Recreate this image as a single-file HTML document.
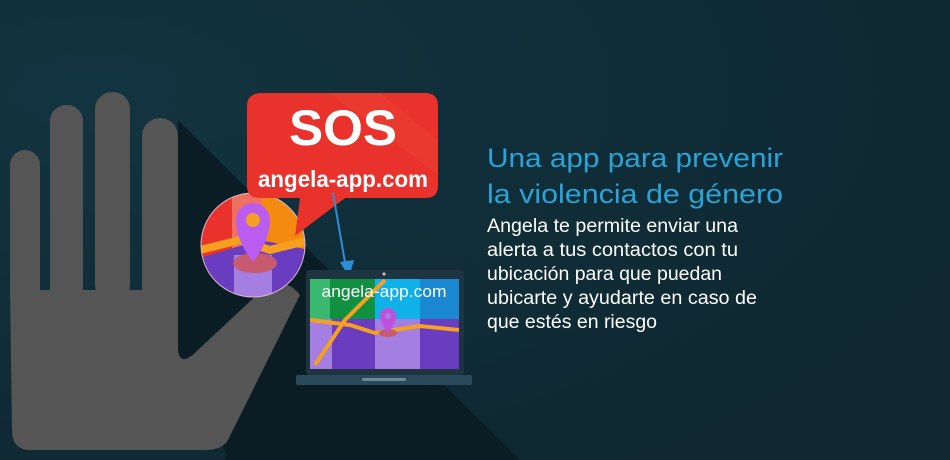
<!DOCTYPE html>
<html><head><meta charset="utf-8"><style>
html,body{margin:0;padding:0;background:#0f2a33;}
svg{display:block}
</style></head><body>
<svg width="950" height="460" viewBox="0 0 950 460" xmlns="http://www.w3.org/2000/svg">
<defs>
<clipPath id="cc"><circle cx="253" cy="245" r="52"/></clipPath>
<clipPath id="sc"><rect x="310" y="279" width="149" height="90"/></clipPath>
<radialGradient id="bg" cx="0.1" cy="0.2" r="1">
<stop offset="0" stop-color="#123440"/><stop offset="1" stop-color="#0e2730"/>
</radialGradient>
</defs>
<rect width="950" height="460" fill="url(#bg)"/>
<!-- long shadow -->
<polygon points="178,120 520,460 230,460 178,360" fill="#0a1d24"/>
<polygon points="280,290 330,320 520,460 225,460" fill="#0a1d24"/>
<!-- hand -->
<g fill="#555555">
<rect x="10" y="150" width="30" height="160" rx="15"/>
<rect x="50" y="105" width="33" height="200" rx="16"/>
<rect x="95" y="92" width="35" height="210" rx="17"/>
<rect x="142" y="118" width="36" height="200" rx="18"/>
<path d="M10,290 L178,290 L178,350 Q180,368 198,350 L262,290 Q285,275 300,295 L228,440 Q222,450 205,450 L30,450 Q12,450 12,430 Z"/>
</g>
<!-- map circle -->
<g clip-path="url(#cc)">
<rect x="200" y="190" width="110" height="110" fill="#e8322b"/>
<rect x="232" y="190" width="30" height="70" fill="#f07060"/>
<rect x="262" y="190" width="48" height="70" fill="#f58a10"/>
<polygon points="200,258 260,240 310,250 310,300 200,300" fill="#6a3cc0"/>
<rect x="234" y="255" width="38" height="50" fill="#a47ee0"/>
<path d="M200,250 L240,240 L270,250 L310,240" stroke="#f7a020" stroke-width="8" fill="none"/>
<ellipse cx="255" cy="263" rx="22" ry="10" fill="#c85a70"/>
</g>
<circle cx="253" cy="245" r="52" fill="none" stroke="#d8b8c8" stroke-width="1"/>
<path d="M253,262 Q236,240 236,220 A17,17 0 0 1 270,220 Q270,240 253,262Z" fill="#bb5cf0"/>
<circle cx="253" cy="220" r="7" fill="#f5a020"/>
<!-- bubble -->
<path d="M262,93 L425,93 Q438,93 438,106 L438,186 Q438,198 425,198 L345,198 L295,236 L300,198 L260,198 Q247,198 247,186 L247,106 Q247,93 262,93Z" fill="#e8322b"/>
<polygon points="330,93 380,93 438,140 438,175" fill="#ee4a3a" opacity="0.35"/>
<text x="343" y="145" text-anchor="middle" font-family="Liberation Sans,sans-serif" font-weight="bold" font-size="50" fill="#fff" textLength="108" lengthAdjust="spacingAndGlyphs">SOS</text>
<text x="343" y="187" text-anchor="middle" font-family="Liberation Sans,sans-serif" font-weight="bold" font-size="23" fill="#fff" textLength="170" lengthAdjust="spacingAndGlyphs">angela-app.com</text>
<!-- arrow -->
<line x1="333" y1="193" x2="346" y2="268" stroke="#2a90d8" stroke-width="2"/>
<polygon points="340,262 354,260 349,277" fill="#2a90d8"/>
<!-- laptop -->
<rect x="306" y="270" width="158" height="105" rx="4" fill="#1e3541"/>
<circle cx="384" cy="274" r="1.5" fill="#ccc"/>
<g clip-path="url(#sc)">
<rect x="310" y="279" width="149" height="90" fill="#6a3cc0"/>
<rect x="310" y="279" width="20" height="40" fill="#3bb870"/>
<rect x="330" y="279" width="45" height="40" fill="#109040"/>
<rect x="375" y="279" width="45" height="40" fill="#10b0e8"/>
<rect x="420" y="279" width="39" height="40" fill="#1a88d0"/>
<rect x="310" y="319" width="22" height="50" fill="#a47ee0"/>
<rect x="375" y="319" width="45" height="50" fill="#a47ee0"/>
<path d="M310,320 L350,325 L375,333 L420,326 L459,330" stroke="#f5a020" stroke-width="4" fill="none"/>
<path d="M315,365 L345,320 L385,280" stroke="#f5a020" stroke-width="4" fill="none"/>
<ellipse cx="388" cy="333" rx="9" ry="4" fill="#c85a70"/>
<path d="M388,333 Q380,322 380,316 A8,8 0 0 1 396,316 Q396,322 388,333Z" fill="#c050e0"/>
<circle cx="388" cy="316" r="3" fill="#a47ee0"/>
</g>
<text x="384" y="297" text-anchor="middle" font-family="Liberation Sans,sans-serif" font-size="17" fill="#fff" textLength="125" lengthAdjust="spacingAndGlyphs">angela-app.com</text>
<rect x="296" y="375" width="176" height="10" rx="2" fill="#2a4a5c"/>
<rect x="362" y="378" width="44" height="3" rx="1.5" fill="#6a8a9a"/>
<!-- text -->
<g font-family="Liberation Sans,sans-serif">
<text x="487" y="167" font-size="27" fill="#2aa3d6" textLength="296" lengthAdjust="spacingAndGlyphs">Una app para prevenir</text>
<text x="487" y="203" font-size="27" fill="#2aa3d6" textLength="296" lengthAdjust="spacingAndGlyphs">la violencia de género</text>
<g font-size="19" fill="#fff">
<text x="487" y="232" textLength="251" lengthAdjust="spacingAndGlyphs">Angela te permite enviar una</text>
<text x="487" y="256" textLength="251" lengthAdjust="spacingAndGlyphs">alerta a tus contactos con tu</text>
<text x="487" y="280" textLength="235" lengthAdjust="spacingAndGlyphs">ubicación para que puedan</text>
<text x="487" y="304" textLength="270" lengthAdjust="spacingAndGlyphs">ubicarte y ayudarte en caso de</text>
<text x="487" y="328" textLength="170" lengthAdjust="spacingAndGlyphs">que estés en riesgo</text>
</g>
</g>
</svg>
</body></html>
